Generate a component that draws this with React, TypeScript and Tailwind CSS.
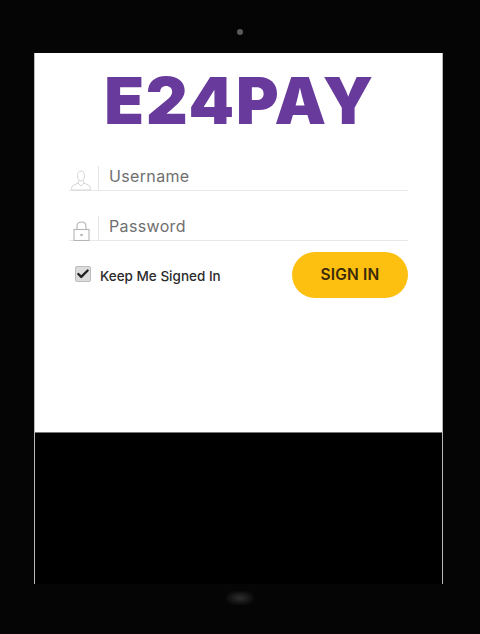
import { Check } from "lucide-react";

function UserIcon() {
  return (
    <svg width="20" height="21" viewBox="0 0 20 21" fill="none" stroke="#d4d4d4" strokeWidth="1">
      <path d="M6.5 5.5C6.5 2.5 8 1 10 1s3.5 1.500 3.500 4.500S12 11 10 11 6.500 8.500 6.500 5.500Z" />
      <path d="M7.500 10.500 7 13l-5 2.500c-1 .6-1.500 2-1.500 4.500h19c0-2.500-.5-3.900-1.500-4.500L13 13l-.5-2.500" />
      <path d="M7 13l3 3 3-3" />
    </svg>
  );
}

function LockIcon() {
  return (
    <svg width="17" height="20" viewBox="0 0 17 20" fill="none" stroke="#b5b5b5" strokeWidth="1.100">
      <rect x="1" y="8.500" width="15" height="11" />
      <path d="M4 8.500V5.500C4 2.800 6 1 8.500 1S13 2.800 13 5.500v3" />
      <circle cx="8.500" cy="14" r="0.800" fill="#b5b5b5" />
    </svg>
  );
}

function Field({ label, icon, rowClass }: { label: string; icon: React.ReactNode; rowClass: string }) {
  return (
    <div className={`flex items-end h-[30px] border-b border-[#e8e8e8] ${rowClass}`}>
      <div className="w-[24px] flex justify-center shrink-0 mb-[-1px]">{icon}</div>
      <div className="w-px h-[24px] bg-[#e4e4e4] ml-[5px] shrink-0" />
      <span className="ml-[10px] mb-[4px] text-[16px] leading-[20px] text-[#6f6f6f] tracking-[0.35px]">{label}</span>
    </div>
  );
}

export default function App() {
  return (
    <div className="w-[480px] h-[634px] bg-[#050505] flex flex-col overflow-hidden font-['Inter',sans-serif]">
      <div className="h-[53px] shrink-0 flex justify-center pt-[29px]">
        <div className="w-[6px] h-[6px] rounded-full bg-[#5a5a5a]" />
      </div>

      <div className="ml-[34px] w-[409px] h-[531px] shrink-0 flex flex-col bg-black border-x border-[#b8b8b8]">
        <div className="h-[380px] shrink-0 bg-white border-b border-[#777] px-[34px] flex flex-col">
          <div className="flex justify-center pl-[2px] mt-[18px] h-[60px] items-center">
            <h1 className="text-[65px] leading-[60px] font-black text-[#673a9c] tracking-[1.800px] font-['Inter',sans-serif]">
              E24PAY
            </h1>
          </div>

          <Field label="Username" icon={<UserIcon />} rowClass="mt-[30px]" />
          <Field label="Password" icon={<LockIcon />} rowClass="mt-[20px]" />

          <div className="flex items-start justify-between mt-[11px]">
            <label className="flex items-center mt-[10px]">
              <span className="w-[16px] h-[16px] ml-[6px] rounded-[2px] bg-[#dcdcdc] border border-[#bdbdbd] flex items-center justify-center">
                <Check size={14} strokeWidth={4} color="#222" />
              </span>
              <span className="ml-[9px] mt-[5px] text-[13.500px] leading-[18px] font-medium text-[#2b2b2b]">
                Keep Me Signed In
              </span>
            </label>
            <button className="w-[116px] h-[46px] rounded-full bg-[#fdbf10] text-[15.500px] font-semibold text-[#3a2a08] tracking-[0.2px]">
              SIGN IN
            </button>
          </div>
        </div>
        <div className="flex-1 bg-black" />
      </div>

      <div className="flex-1 flex justify-center pt-[7px]">
        <div className="w-[28px] h-[14px] rounded-full bg-[radial-gradient(closest-side,#2e2e2e,#0a0a0a)]" />
      </div>
    </div>
  );
}
